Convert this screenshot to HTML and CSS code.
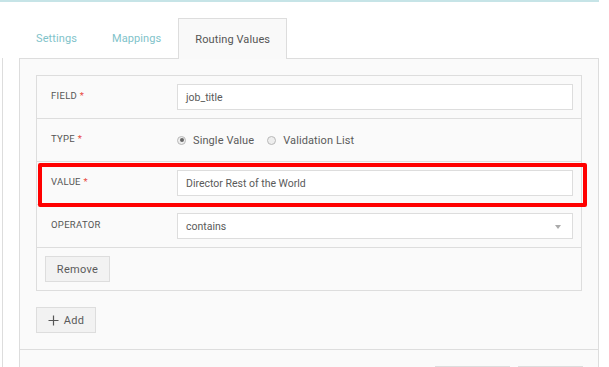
FILE: index.html
```html
<!DOCTYPE html>
<html>
<head>
<meta charset="utf-8">
<link rel="stylesheet" href="styles.css">
</head>
<body>
<div class="topbar"></div>
<div class="layout">
  <div class="sidebar"></div>
  <div class="main">
    <div class="tabs">
      <div class="tab">Settings</div>
      <div class="tab second">Mappings</div>
      <div class="tab active">Routing Values</div>
    </div>
    <div class="panel">
      <div class="panel-body">
        <div class="card">
          <div class="row">
            <div class="label">FIELD <span class="req">*</span></div>
            <div class="control"><div class="input">job_title</div></div>
          </div>
          <div class="row">
            <div class="label">TYPE <span class="req">*</span></div>
            <div class="control radios">
              <span class="radio checked"></span><span class="rlabel">Single Value</span>
              <span class="radio"></span><span class="rlabel">Validation List</span>
            </div>
          </div>
          <div class="row highlight-row">
            <div class="label">VALUE <span class="req">*</span></div>
            <div class="control"><div class="input">Director Rest of the World</div></div>
            <div class="highlight"></div>
          </div>
          <div class="row">
            <div class="label">OPERATOR</div>
            <div class="control"><div class="input select">contains<span class="caret"></span></div></div>
          </div>
          <div class="row actions">
            <div class="btn remove">Remove</div>
          </div>
        </div>
        <div class="btn add"><svg class="plus" width="11" height="11" viewBox="0 0 11 11"><path d="M5.5 0.5V10.5M0.5 5.5H10.5" stroke="#555" stroke-width="1.2" fill="none"/></svg>Add</div>
      </div>
      <div class="panel-footer">
        <div class="btn fbtn w1"></div>
        <div class="btn fbtn w2"></div>
      </div>
    </div>
  </div>
</div>
</body>
</html>
```

FILE: styles.css
```css
* { box-sizing: border-box; }
html, body { margin: 0; padding: 0; background: #fff; }
body {
  font-family: Roboto, "Liberation Sans", sans-serif;
  color: #5a5a5a;
  width: 609px;
  height: 367px;
  overflow: hidden;
}
.topbar {
  width: 599px;
  height: 2px;
  background: #c6e4e7;
}
.layout {
  display: flex;
  align-items: flex-start;
}
.sidebar {
  width: 3px;
  height: 309px;
  margin-top: 56px;
  border-right: 1px solid #dddddd;
  margin-right: 16px;
}
.main {
  width: 580px;
}
.tabs {
  display: flex;
  margin-top: 16px;
  height: 40px;
  align-items: stretch;
}
.tab {
  font-size: 11px;
  letter-spacing: 0.1px;
  color: #7fc3ca;
  padding: 0 16px;
  border: 1px solid transparent;
  border-bottom: none;
  display: flex;
  align-items: center;
}
.tab.second { margin-left: 1px; }
.tab.active {
  color: #555;
  background: #f9f9f9;
  border-color: #dddddd;
  position: relative;
  height: 41px;
  z-index: 1;
}
.panel {
  border: 1px solid #dddddd;
  border-bottom: none;
  background: #fafafa;
}
.panel-body {
  padding: 16px 16px 16px 16px;
  border-bottom: 1px solid #dddddd;
}
.card {
  border: 1px solid #dddddd;
  background: #fafafa;
}
.row {
  display: flex;
  align-items: center;
  padding: 8px 8px 8px 14px;
  border-bottom: 1px solid #dddddd;
}
.row.actions { border-bottom: none; padding-left: 8px; }
.label {
  width: 126px;
  flex: none;
  font-size: 9.5px;
  letter-spacing: 0.3px;
  color: #555;
  margin-top: -3px;
}
.req { color: #e8493f; }
.control {
  flex: 1;
  display: flex;
  align-items: center;
  height: 26px;
}
.input {
  width: 100%;
  height: 26px;
  background: #fff;
  border: 1px solid #dddddd;
  font-size: 10.5px;
  color: #5a5a5a;
  padding: 0 8px;
  display: flex;
  align-items: center;
  position: relative;
}
.caret {
  position: absolute;
  right: 11px;
  top: 11px;
  width: 0;
  height: 0;
  border-left: 3.5px solid transparent;
  border-right: 3.5px solid transparent;
  border-top: 4px solid #aaa;
}
.radios { font-size: 11px; letter-spacing: 0.1px; }
.radio {
  width: 9px;
  height: 9px;
  border-radius: 50%;
  border: 1px solid #b8b8b8;
  background: #eee;
  display: inline-flex;
  align-items: center;
  justify-content: center;
  margin-right: 7px;
}
.radio.checked::after {
  content: "";
  width: 4px;
  height: 4px;
  border-radius: 50%;
  background: #666;
}
.rlabel { margin-right: 13px; }
.highlight-row { position: relative; }
.highlight {
  position: absolute;
  left: 1px;
  top: 1px;
  right: -6px;
  bottom: -3px;
  border: 4px solid #ff0000;
  border-radius: 2px;
}
.btn {
  display: inline-flex;
  align-items: center;
  justify-content: center;
  height: 26px;
  background: #f2f2f2;
  border: 1px solid #dddddd;
  font-size: 11px;
  color: #5a5a5a;
}
.remove { width: 65px; letter-spacing: 0.3px; }
.add { width: 60px; margin-top: 16px; letter-spacing: 0.3px; }
.plus { margin-right: 5px; }
.panel-footer {
  display: flex;
  justify-content: flex-end;
  gap: 8px;
  padding: 16px 15px 0 0;
  height: 18px;
  overflow: visible;
}
.fbtn { background: #fafafa; flex: none; }
.w1 { width: 75px; }
.w2 { width: 65px; }
```
